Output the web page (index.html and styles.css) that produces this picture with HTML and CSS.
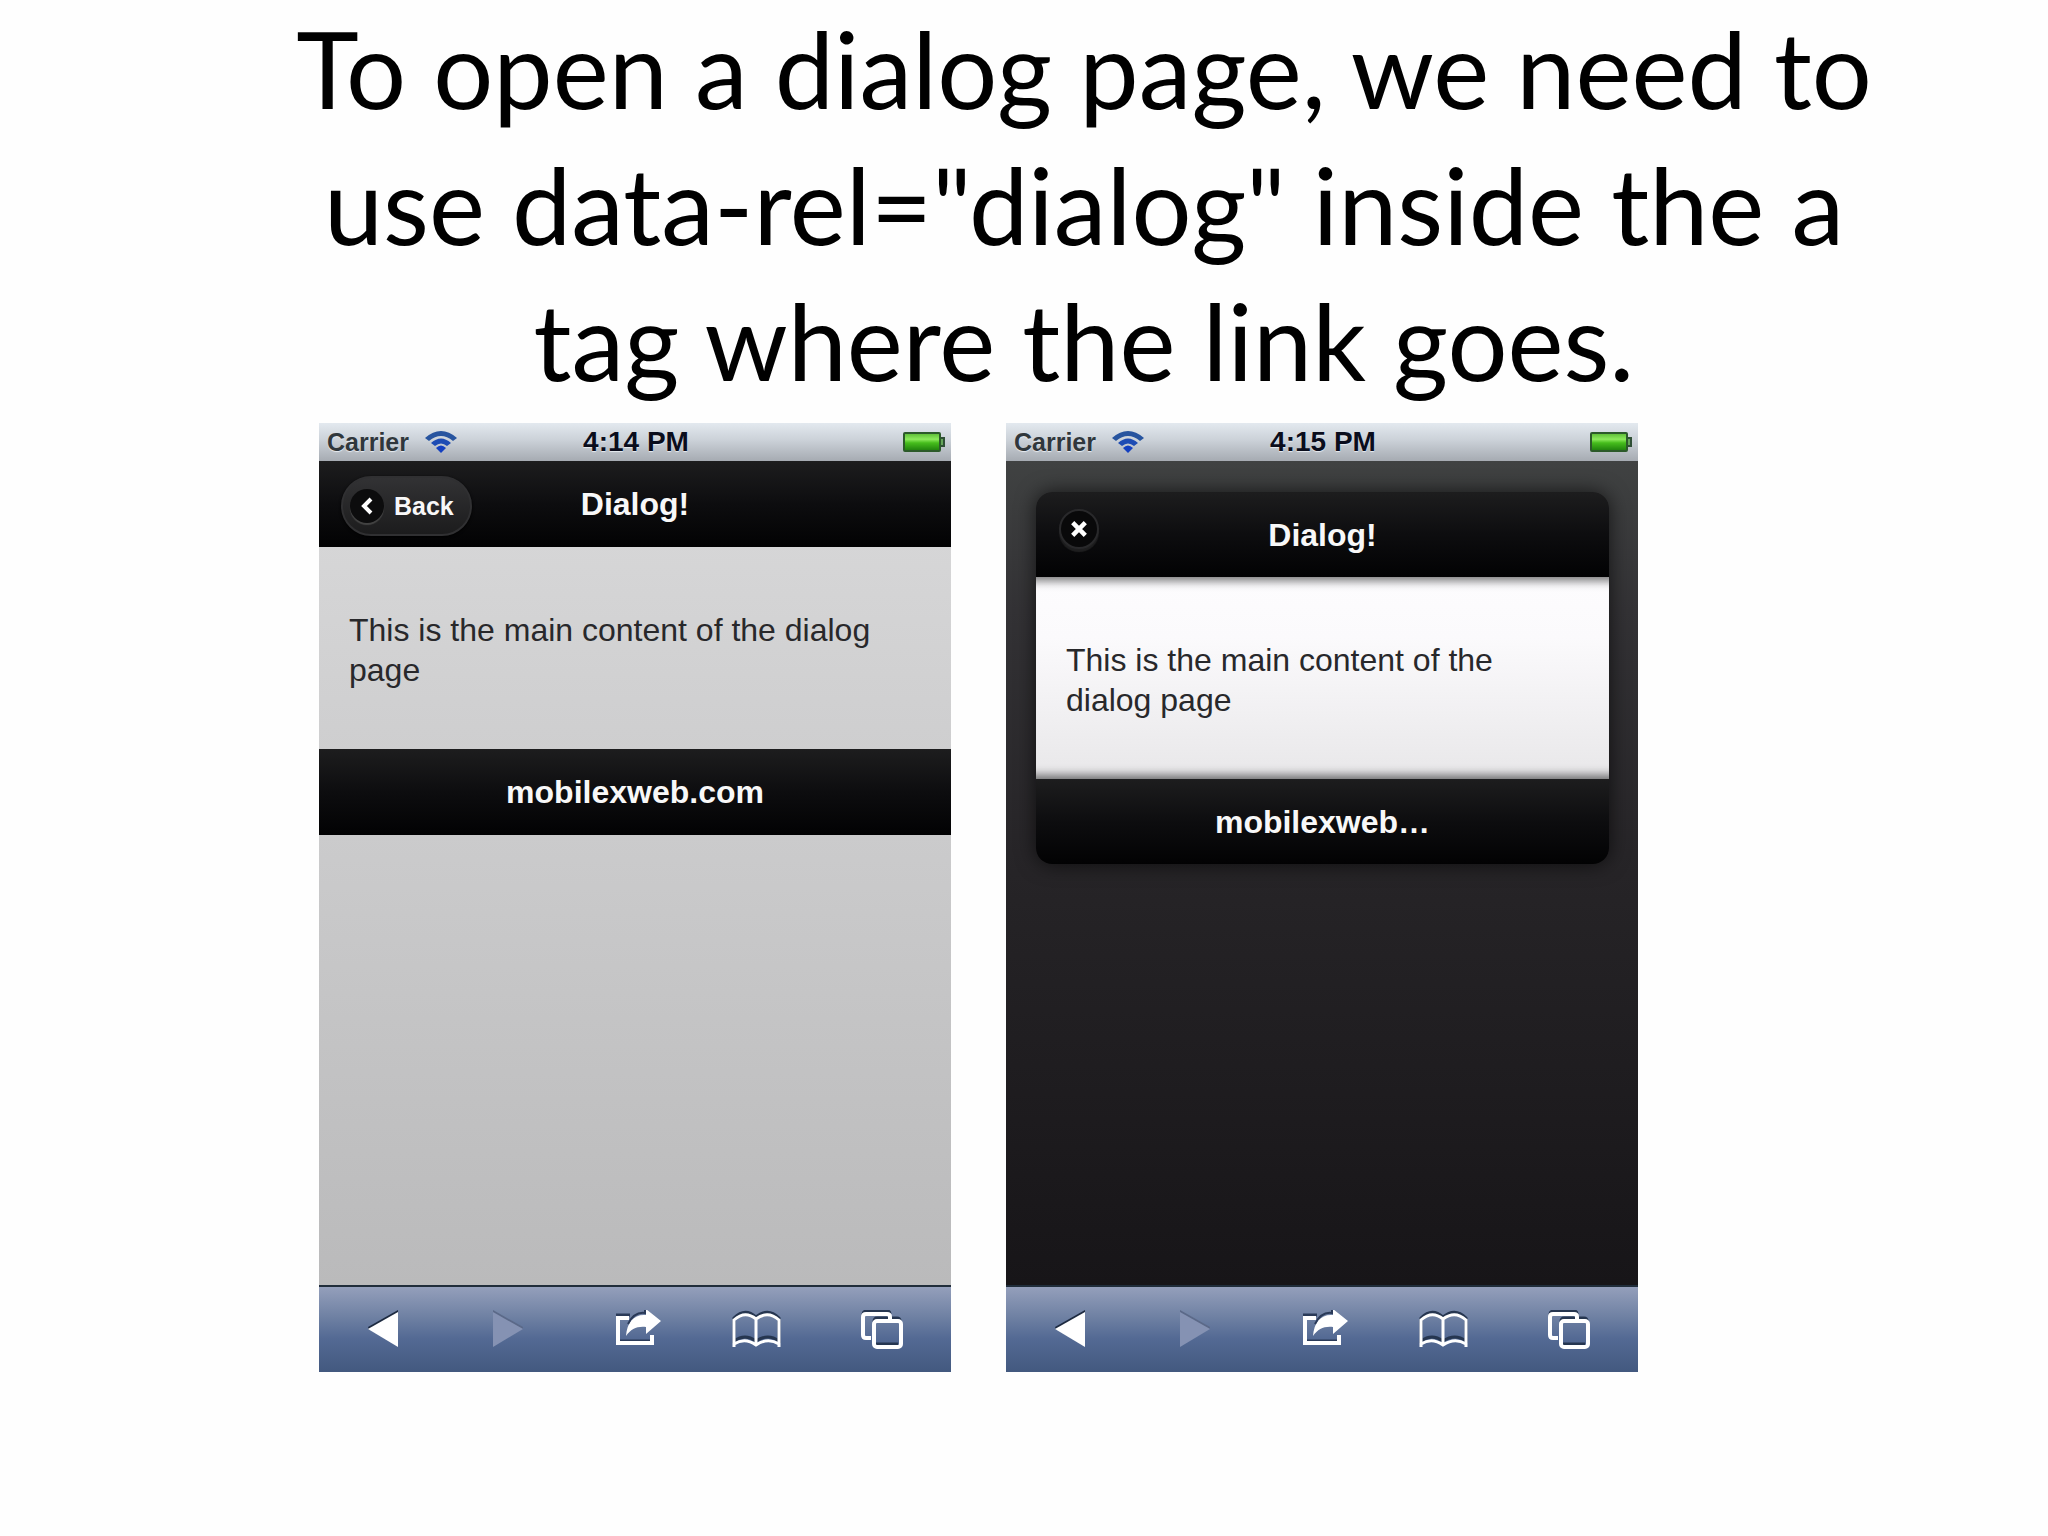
FILE: index.html
```
<!DOCTYPE html>
<html lang="en">
<head>
<meta charset="utf-8">
<title>Dialog pages</title>
<link rel="stylesheet" href="styles.css">
</head>
<body>
<svg class="sprite" aria-hidden="true">
  <defs>
    <linearGradient id="charge" x1="0" y1="0" x2="0" y2="1"><stop offset="0" stop-color="#58b833"/><stop offset=".35" stop-color="#8cea5c"/><stop offset=".55" stop-color="#46bd1c"/><stop offset="1" stop-color="#1c7c0c"/></linearGradient>
    <symbol id="wifi" viewBox="0 0 34 24">
      <path d="M1 8 Q17 -6 33 8 L29 11 Q17 1 5 11Z" fill="#27549f"/>
      <path d="M7 13 Q17 4 27 13 L23 16 Q17 11 11 16Z" fill="#1e4cb4"/>
      <path d="M12 18 Q17 13 22 18 L17 23Z" fill="#1440c0"/>
    </symbol>
    <symbol id="battery" viewBox="0 0 42 20">
      <path d="M37 6h4v8h-4z" fill="#65a55a" stroke="#2f4f35" stroke-width="2"/>
      <rect x="1" y="1" width="36" height="18" rx="1" fill="url(#charge)" stroke="#2c5a2a" stroke-width="2"/>
    </symbol>
    <symbol id="previous" viewBox="0 0 60 40"><path d="M15 17 45 0V4L16 20Z" fill="#1d2a40"/><path d="M15 19 45 2V37Z" fill="#fff"/></symbol>
    <symbol id="next" viewBox="0 0 60 40"><path d="M15 0 45 17V19L15 4Z" fill="#5b6988"/><path d="M15 2 45 19 15 37Z" fill="#8592b3"/></symbol>
    <symbol id="share" viewBox="0 0 62 40">
      <path d="M15 5h14M18 31h32" fill="none" stroke="#2a3a58" stroke-width="3"/>
      <path d="M28 8H17V33H51V25" fill="none" stroke="#fff" stroke-width="4"/>
      <path d="M25 26C26 12 33 4 45 5V-1L60 11 45 24V17C36 16 30 19 25 26Z" fill="#fff"/>
      <path d="M27 14C31 6 37 2 44 3V-2" fill="none" stroke="#2a3a58" stroke-width="2"/>
    </symbol>
    <symbol id="book" viewBox="0 0 62 40">
      <path d="M9 33V8Q20 -3 31 7Q43 -3 54 8V33" fill="none" stroke="#263650" stroke-width="3"/>
      <path d="M9 31Q20 23 31 31Q43 23 54 31" fill="none" stroke="#263650" stroke-width="3"/>
      <path d="M9 37V10Q20 0 31 9Q43 0 54 10V37M9 34Q20 27 31 35Q43 27 54 34M31 9V36" fill="none" stroke="#fff" stroke-width="3"/>
    </symbol>
    <symbol id="pages" viewBox="0 0 60 40">
      <path d="M12 5Q12 1 16 1H36Q39 1 39 4M23 12Q23 8 26 8H46Q49 8 49 11M24 34H47" fill="none" stroke="#263650" stroke-width="3"/>
      <path d="M39 9V7Q39 4 36 4H15Q12 4 12 7V25Q12 28 15 28H20" fill="none" stroke="#fff" stroke-width="4"/>
      <rect x="23" y="11" width="27" height="26" rx="3" fill="none" stroke="#fff" stroke-width="4"/>
    </symbol>
  </defs>
</svg>

<main class="slide">
  <h1 class="title">To open a dialog page, we need to<br>use data-rel="dialog" inside the a<br>tag where the link goes.</h1>

  <div class="phones">
    <section class="phone phone-page" aria-label="Page view">
      <div class="status">
        <span class="carrier">Carrier <svg class="wifi"><use href="#wifi"/></svg></span>
        <span class="time">4:14 PM</span>
        <svg class="battery"><use href="#battery"/></svg>
      </div>
      <div class="screen">
        <header class="bar">
          <button class="back" type="button"><span class="disc"><svg class="chevron" viewBox="0 0 14 20"><path d="M11 3 4 10 11 17" fill="none" stroke="#fff" stroke-width="4"/></svg></span>Back</button>
          <h2 class="bar-title">Dialog!</h2>
        </header>
        <p class="content">This is the main content of the dialog page</p>
        <footer class="bar"><h3 class="bar-title">mobilexweb.com</h3></footer>
      </div>
      <nav class="toolbar" aria-label="Browser">
        <button class="tool" type="button" aria-label="Previous"><svg class="icon"><use href="#previous"/></svg></button>
        <button class="tool" type="button" aria-label="Next" disabled><svg class="icon"><use href="#next"/></svg></button>
        <button class="tool" type="button" aria-label="Share"><svg class="icon icon-wide"><use href="#share"/></svg></button>
        <button class="tool" type="button" aria-label="Bookmarks"><svg class="icon icon-wide"><use href="#book"/></svg></button>
        <button class="tool" type="button" aria-label="Pages"><svg class="icon"><use href="#pages"/></svg></button>
      </nav>
    </section>

    <section class="phone phone-dialog" aria-label="Dialog view">
      <div class="status">
        <span class="carrier">Carrier <svg class="wifi"><use href="#wifi"/></svg></span>
        <span class="time">4:15 PM</span>
        <svg class="battery"><use href="#battery"/></svg>
      </div>
      <div class="screen">
        <div class="dialog" role="dialog" aria-label="Dialog!">
          <header class="bar">
            <button class="close" type="button" aria-label="Close"><svg class="cross" viewBox="0 0 20 20"><path d="M3 3 17 17M17 3 3 17" stroke="#fff" stroke-width="5"/></svg></button>
            <h2 class="bar-title">Dialog!</h2>
          </header>
          <p class="content">This is the main content of the dialog page</p>
          <footer class="bar"><h3 class="bar-title">mobilexweb…</h3></footer>
        </div>
      </div>
      <nav class="toolbar" aria-label="Browser">
        <button class="tool" type="button" aria-label="Previous"><svg class="icon"><use href="#previous"/></svg></button>
        <button class="tool" type="button" aria-label="Next" disabled><svg class="icon"><use href="#next"/></svg></button>
        <button class="tool" type="button" aria-label="Share"><svg class="icon icon-wide"><use href="#share"/></svg></button>
        <button class="tool" type="button" aria-label="Bookmarks"><svg class="icon icon-wide"><use href="#book"/></svg></button>
        <button class="tool" type="button" aria-label="Pages"><svg class="icon"><use href="#pages"/></svg></button>
      </nav>
    </section>
  </div>
</main>
</body>
</html>
```
FILE: styles.css
```
* { box-sizing: border-box; }

body {
  margin: 0;
  background: #fefefe;
  color: #000;
  font-family: "Liberation Sans", Arial, sans-serif;
}

h1, h2, h3, p { margin: 0; }

button {
  padding: 0;
  border: 0;
  background: none;
  color: inherit;
  font: inherit;
}

.sprite { position: absolute; width: 0; height: 0; }

.slide { padding-bottom: 160px; }

.title {
  padding: 0 80px 15px 200px;
  font-family: Lato, sans-serif;
  font-size: 106px;
  font-weight: 400;
  line-height: 136px;
  text-align: center;
}

.phones {
  display: grid;
  grid-template-columns: 1fr 1fr;
  gap: 55px;
  padding: 0 410px 0 319px;
}

.phone { display: flex; flex-direction: column; }

.status {
  display: grid;
  grid-template-columns: 1fr auto 1fr;
  align-items: center;
  height: 38px;
  padding: 0 6px 0 8px;
  background: linear-gradient(#e3e9ef, #cbd1d8 45%, #a6abb2);
  font-size: 25px;
  font-weight: 700;
  text-shadow: 0 1px 1px #e8edf2;
}

.carrier { display: flex; align-items: center; gap: 15px; color: #30373c; }
.time { color: #0a0d1c; font-size: 28px; line-height: 32px; }
.wifi { width: 34px; height: 24px; }
.battery { justify-self: end; width: 42px; height: 20px; }

.screen { min-height: 824px; }
.phone-page .screen { background: linear-gradient(#d9d9da, #bababb); }
.phone-dialog .screen { padding: 31px 29px 0 30px; background: linear-gradient(#404242, #333235 18%, #262427 50%, #171518); }

.bar {
  display: grid;
  grid-template-columns: 1fr auto 1fr;
  align-items: center;
  height: 86px;
  background: linear-gradient(#1d1d1e, #0d0d0f 50%, #020203);
  color: #f8f8f8;
}

.bar-title { grid-column: 2; font-size: 32px; font-weight: 700; line-height: 40px; }

.back {
  display: flex;
  align-items: center;
  gap: 10px;
  justify-self: start;
  height: 60px;
  margin: 4px 0 0 22px;
  padding: 0 16px 0 7px;
  border: 2px solid #303032;
  border-radius: 30px;
  background: linear-gradient(#323234, #1c1c1d);
  box-shadow: 0 1px 3px #000;
  font-size: 25px;
  font-weight: 700;
}

.disc {
  display: grid;
  place-items: center;
  width: 34px;
  height: 34px;
  border-radius: 50%;
  background: #0c0c0d;
  box-shadow: 0 2px 1px #444;
}

.chevron { width: 14px; height: 20px; }

.content { padding: 63px 30px 59px; color: #28282b; font-size: 32px; line-height: 40px; }

.dialog { border-radius: 16px; box-shadow: 0 0 20px #000a; }
.dialog .bar { height: 85px; }
.dialog header { border-radius: 16px 16px 0 0; }
.dialog footer { border-radius: 0 0 16px 16px; }
.dialog .content {
  background: linear-gradient(#fdfcfe, #fbfafc 30%, #e8e7e9);
  box-shadow: inset 0 14px 10px -10px #0008, inset 0 -14px 10px -10px #0008;
}

.close {
  display: grid;
  place-items: center;
  justify-self: start;
  width: 40px;
  height: 40px;
  margin: 0 0 12px 23px;
  border: 2px solid #29292b;
  border-radius: 50%;
  background: #09090a;
  box-shadow: 0 3px 1px #1f1f20;
}

.cross { width: 18px; height: 18px; }

.toolbar {
  display: grid;
  grid-template-columns: repeat(5, 1fr);
  align-items: center;
  height: 87px;
  padding: 0 8px 0 2px;
  border-top: 2px solid #202d3a;
  background: linear-gradient(#949fbb, #6f81a3 35%, #546a94 60%, #43597f);
}

.tool { display: grid; place-items: center; }
.icon { width: 60px; height: 40px; overflow: visible; }
.icon-wide { width: 62px; }
```
